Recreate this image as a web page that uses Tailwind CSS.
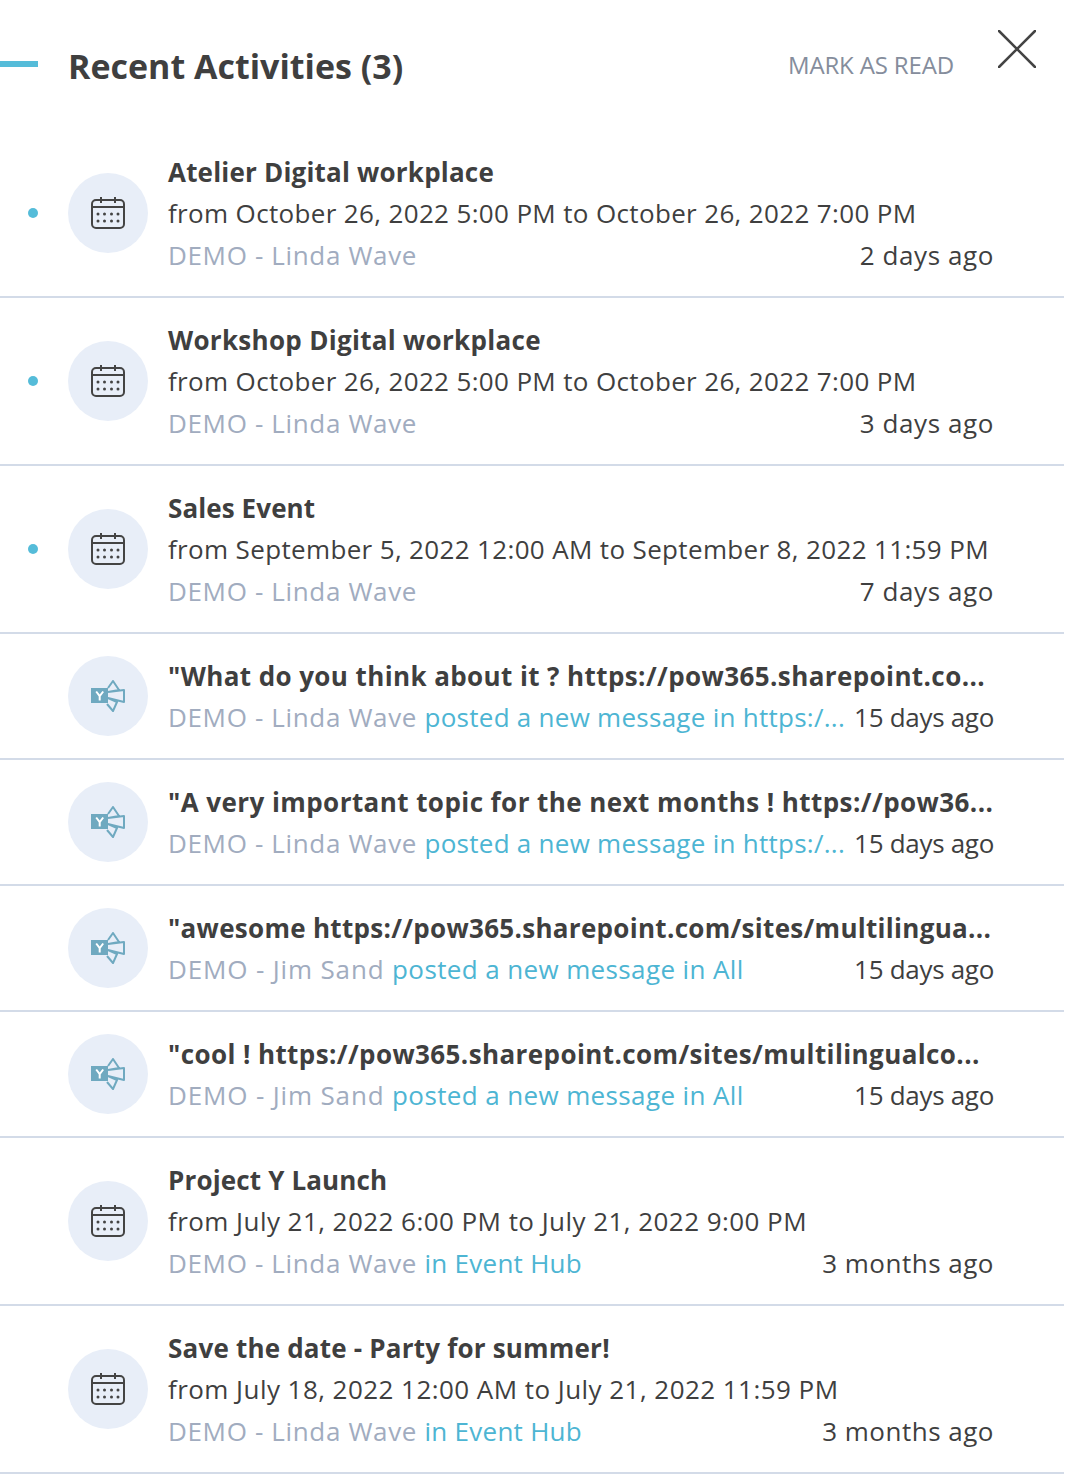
<!DOCTYPE html>
<html lang="en">
<head>
    <meta charset="UTF-8">
    <title>Recent Activities</title>
    <script src="https://cdn.jsdelivr.net/npm/@tailwindcss/browser@4"></script>
</head>
<body class="bg-white font-['Open_Sans',sans-serif] text-[26px] leading-[42px] tracking-[0.35px] text-[#3f3f3f]">

    <svg class="hidden">
        <symbol id="cal" viewBox="0 0 34 32">
            <rect x="1" y="3" width="32" height="28" rx="4" fill="none" stroke="#444" stroke-width="2"/>
            <path d="M1 10h32M10 0v6M24 0v6" fill="none" stroke="#444" stroke-width="2"/>
            <g fill="#444">
                <circle cx="7" cy="17" r="1.5"/><circle cx="13.5" cy="17" r="1.5"/><circle cx="20.5" cy="17" r="1.5"/><circle cx="27" cy="17" r="1.5"/>
                <circle cx="7" cy="24" r="1.5"/><circle cx="13.5" cy="24" r="1.5"/><circle cx="20.5" cy="24" r="1.5"/><circle cx="27" cy="24" r="1.5"/>
            </g>
        </symbol>
        <symbol id="yam" viewBox="0 0 34 32">
            <path d="M0 8h17v15H0z" fill="#6fa9c0"/>
            <path d="M17 8l5-7 6 9-11 2M17 12l16-2v12l-16-4M17 18l9 4-4 9-6-7" fill="none" stroke="#6fa9c0" stroke-width="2" stroke-linejoin="round"/>
            <path d="M5.200 11.500l3.500 4.500 3.500-4.500M8.700 16v4.500" fill="none" stroke="#fff" stroke-width="2"/>
        </symbol>
    </svg>

    <!-- Header -->
    <header class="flex items-center h-[130px] w-[1064px] relative">
        <div class="absolute left-0 top-[61px] w-[38px] h-[6px] bg-[#55bcd9]"></div>
        <h1 class="ml-[68px] text-[34px] font-bold tracking-normal mb-[-1px]">Recent Activities (3)</h1>
        <span class="ml-auto text-[24px] tracking-[-0.15px] text-[#858d9c] mr-[110px]">MARK AS READ</span>
        <svg class="absolute left-[998px] top-[30px] w-[38px] h-[38px]" viewBox="0 0 38 38"><path d="M1 1l36 36M37 1L1 37" stroke="#444" stroke-width="2.5" stroke-linecap="round"/></svg>
    </header>

    <!-- Activities -->
    <main class="w-[1064px]">
        <div class="flex items-center py-[21px] border-b-2 border-[#d3dbe8] h-[168px]">
            <div class="w-[10px] h-[10px] rounded-full bg-[#55bcd9] ml-[28px] mr-[30px]"></div>
            <div class="w-[80px] h-[80px] rounded-full bg-[#e8eef8] flex items-center justify-center shrink-0"><svg class="w-[34px] h-[32px]"><use href="#cal"/></svg></div>
            <div class="ml-[20px] w-[826px]">
                <div class="font-bold translate-y-px tracking-[0.2px]">Atelier Digital workplace</div>
                <div>from October 26, 2022 5:00 PM to October 26, 2022 7:00 PM</div>
                <div class="flex justify-between"><span class="text-[#a1acbf] tracking-[0.65px]">DEMO - Linda Wave</span><span class="tracking-[0.6px]">2 days ago</span></div>
            </div>
        </div>
        <div class="flex items-center py-[21px] border-b-2 border-[#d3dbe8] h-[168px]">
            <div class="w-[10px] h-[10px] rounded-full bg-[#55bcd9] ml-[28px] mr-[30px]"></div>
            <div class="w-[80px] h-[80px] rounded-full bg-[#e8eef8] flex items-center justify-center shrink-0"><svg class="w-[34px] h-[32px]"><use href="#cal"/></svg></div>
            <div class="ml-[20px] w-[826px]">
                <div class="font-bold translate-y-px tracking-[0.3px]">Workshop Digital workplace</div>
                <div>from October 26, 2022 5:00 PM to October 26, 2022 7:00 PM</div>
                <div class="flex justify-between"><span class="text-[#a1acbf] tracking-[0.65px]">DEMO - Linda Wave</span><span class="tracking-[0.6px]">3 days ago</span></div>
            </div>
        </div>
        <div class="flex items-center py-[21px] border-b-2 border-[#d3dbe8] h-[168px]">
            <div class="w-[10px] h-[10px] rounded-full bg-[#55bcd9] ml-[28px] mr-[30px]"></div>
            <div class="w-[80px] h-[80px] rounded-full bg-[#e8eef8] flex items-center justify-center shrink-0"><svg class="w-[34px] h-[32px]"><use href="#cal"/></svg></div>
            <div class="ml-[20px] w-[826px]">
                <div class="font-bold translate-y-px tracking-[0.1px]">Sales Event</div>
                <div>from September 5, 2022 12:00 AM to September 8, 2022 11:59 PM</div>
                <div class="flex justify-between"><span class="text-[#a1acbf] tracking-[0.65px]">DEMO - Linda Wave</span><span class="tracking-[0.6px]">7 days ago</span></div>
            </div>
        </div>
        <div class="flex items-center py-[21px] border-b-2 border-[#d3dbe8] h-[126px]">
            <div class="w-[80px] h-[80px] rounded-full bg-[#e8eef8] flex items-center justify-center shrink-0 ml-[68px]"><svg class="w-[34px] h-[32px]"><use href="#yam"/></svg></div>
            <div class="ml-[20px] w-[826px]">
                <div class="font-bold translate-y-px tracking-[0.4px] whitespace-nowrap">"What do you think about it ? https://pow365.sharepoint.co...</div>
                <div class="flex justify-between whitespace-nowrap"><span class="text-[#a1acbf] tracking-[0.65px]">DEMO - Linda Wave <span class="text-[#4db5d3] tracking-[0.27px]">posted a new message in https:/...</span></span><span class="tracking-[-0.3px]">15 days ago</span></div>
            </div>
        </div>
        <div class="flex items-center py-[21px] border-b-2 border-[#d3dbe8] h-[126px]">
            <div class="w-[80px] h-[80px] rounded-full bg-[#e8eef8] flex items-center justify-center shrink-0 ml-[68px]"><svg class="w-[34px] h-[32px]"><use href="#yam"/></svg></div>
            <div class="ml-[20px] w-[826px]">
                <div class="font-bold translate-y-px tracking-[0.43px] whitespace-nowrap">"A very important topic for the next months ! https://pow36...</div>
                <div class="flex justify-between whitespace-nowrap"><span class="text-[#a1acbf] tracking-[0.65px]">DEMO - Linda Wave <span class="text-[#4db5d3] tracking-[0.27px]">posted a new message in https:/...</span></span><span class="tracking-[-0.3px]">15 days ago</span></div>
            </div>
        </div>
        <div class="flex items-center py-[21px] border-b-2 border-[#d3dbe8] h-[126px]">
            <div class="w-[80px] h-[80px] rounded-full bg-[#e8eef8] flex items-center justify-center shrink-0 ml-[68px]"><svg class="w-[34px] h-[32px]"><use href="#yam"/></svg></div>
            <div class="ml-[20px] w-[826px]">
                <div class="font-bold translate-y-px tracking-[0.3px] whitespace-nowrap">"awesome https://pow365.sharepoint.com/sites/multilingua...</div>
                <div class="flex justify-between whitespace-nowrap"><span class="text-[#a1acbf] tracking-[0.85px]">DEMO - Jim Sand <span class="text-[#4db5d3] tracking-[0.38px]">posted a new message in All</span></span><span class="tracking-[-0.3px]">15 days ago</span></div>
            </div>
        </div>
        <div class="flex items-center py-[21px] border-b-2 border-[#d3dbe8] h-[126px]">
            <div class="w-[80px] h-[80px] rounded-full bg-[#e8eef8] flex items-center justify-center shrink-0 ml-[68px]"><svg class="w-[34px] h-[32px]"><use href="#yam"/></svg></div>
            <div class="ml-[20px] w-[826px]">
                <div class="font-bold translate-y-px tracking-[0.4px] whitespace-nowrap">"cool ! https://pow365.sharepoint.com/sites/multilingualco...</div>
                <div class="flex justify-between whitespace-nowrap"><span class="text-[#a1acbf] tracking-[0.85px]">DEMO - Jim Sand <span class="text-[#4db5d3] tracking-[0.38px]">posted a new message in All</span></span><span class="tracking-[-0.3px]">15 days ago</span></div>
            </div>
        </div>
        <div class="flex items-center py-[21px] border-b-2 border-[#d3dbe8] h-[168px]">
            <div class="w-[80px] h-[80px] rounded-full bg-[#e8eef8] flex items-center justify-center shrink-0 ml-[68px]"><svg class="w-[34px] h-[32px]"><use href="#cal"/></svg></div>
            <div class="ml-[20px] w-[826px]">
                <div class="font-bold translate-y-px tracking-[0.15px]">Project Y Launch</div>
                <div class="tracking-[0.45px]">from July 21, 2022 6:00 PM to July 21, 2022 9:00 PM</div>
                <div class="flex justify-between"><span class="text-[#a1acbf] tracking-[0.65px]">DEMO - Linda Wave <span class="text-[#4db5d3] tracking-[0.27px]">in Event Hub</span></span><span class="tracking-[0.5px]">3 months ago</span></div>
            </div>
        </div>
        <div class="flex items-center py-[21px] border-b-2 border-[#d3dbe8] h-[168px]">
            <div class="w-[80px] h-[80px] rounded-full bg-[#e8eef8] flex items-center justify-center shrink-0 ml-[68px]"><svg class="w-[34px] h-[32px]"><use href="#cal"/></svg></div>
            <div class="ml-[20px] w-[826px]">
                <div class="font-bold translate-y-px tracking-[0.2px]">Save the date - Party for summer!</div>
                <div class="tracking-[0.45px]">from July 18, 2022 12:00 AM to July 21, 2022 11:59 PM</div>
                <div class="flex justify-between"><span class="text-[#a1acbf] tracking-[0.65px]">DEMO - Linda Wave <span class="text-[#4db5d3] tracking-[0.27px]">in Event Hub</span></span><span class="tracking-[0.5px]">3 months ago</span></div>
            </div>
        </div>
    </main>

</body>
</html>
